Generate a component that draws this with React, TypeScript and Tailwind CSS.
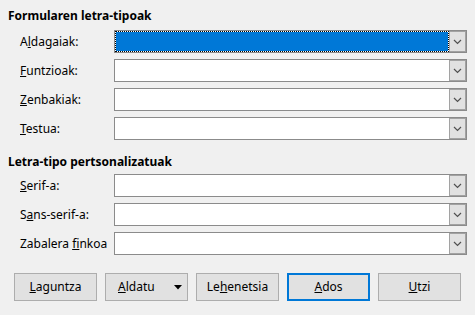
import React from "react";

const font = { fontFamily: '"Noto Sans", "Open Sans", sans-serif' };

function Chevron() {
  return (
    <svg width="9" height="6" viewBox="0 0 9 6">
      <polyline points="1,1 4.5,4.5 8,1" fill="none" stroke="#505050" strokeWidth="1.2" />
    </svg>
  );
}

function Combo({ focused = false }: { focused?: boolean }) {
  return (
    <div className="flex-1 h-[23px] border border-[#8b8b8b] bg-white flex">
      {focused ? (
        <div className="flex-1 bg-white border border-dotted border-black">
          <div className="w-full h-full bg-[#0078d7]" />
        </div>
      ) : (
        <div className="flex-1" />
      )}
      <div className="w-[17px] bg-[#e1e1e1] border border-[#a2a2a2] flex items-center justify-center">
        <Chevron />
      </div>
    </div>
  );
}

function Row({ label, focused }: { label: React.ReactNode; focused?: boolean }) {
  return (
    <div className="flex items-center h-[23px]">
      <div className="w-[114px] shrink-0 pl-[20px] text-[12px] text-black leading-none whitespace-nowrap">{label}</div>
      <Combo focused={focused} />
    </div>
  );
}

function Btn({ children, primary = false }: { children: React.ReactNode; primary?: boolean }) {
  return (
    <div
      className={
        "w-[83px] h-[28px] bg-[#e1e1e1] flex items-center justify-center text-[12px] text-black " +
        (primary ? "border-2 border-[#0078d7]" : "border border-[#adadad]")
      }
    >
      {children}
    </div>
  );
}

export default function App() {
  return (
    <div className="w-[475px] h-[315px] bg-[#f0f0f0] pr-[8px]" style={font}>
      <div className="pt-[8px] pl-[8px] h-[24px] text-[12px] font-bold leading-[16px] text-black">
        Formularen letra-tipoak
      </div>
      <div className="mt-[6px] flex flex-col gap-[6px]">
        <Row focused label={<span>A<u>l</u>dagaiak:</span>} />
        <Row label={<span><u>F</u>untzioak:</span>} />
        <Row label={<span><u>Z</u>enbakiak:</span>} />
        <Row label={<span><u>T</u>estua:</span>} />
      </div>
      <div className="mt-[14px] pl-[8px] h-[16px] text-[12px] font-bold leading-[16px] text-black">
        Letra-tipo pertsonalizatuak
      </div>
      <div className="mt-[4px] flex flex-col gap-[6px]">
        <Row label={<span><u>S</u>erif-a:</span>} />
        <Row label={<span>S<u>a</u>ns-serif-a:</span>} />
        <Row label={<span>Zabalera <u>f</u>inkoa</span>} />
      </div>
      <div className="mt-[18px] pl-[14px] flex gap-[8px]">
        <Btn><span><u>L</u>aguntza</span></Btn>
        <div className="w-[83px] h-[28px] bg-[#e1e1e1] border border-[#adadad] flex items-center text-[12px] text-black">
          <span className="pl-[12px]"><u>A</u>ldatu</span>
          <svg className="ml-[19px]" width="8" height="5" viewBox="0 0 8 5">
            <polygon points="0,0 8,0 4,4.5" fill="#000" />
          </svg>
        </div>
        <Btn><span>Le<u>h</u>enetsia</span></Btn>
        <Btn primary><span><u>A</u>dos</span></Btn>
        <Btn><span><u>U</u>tzi</span></Btn>
      </div>
    </div>
  );
}
